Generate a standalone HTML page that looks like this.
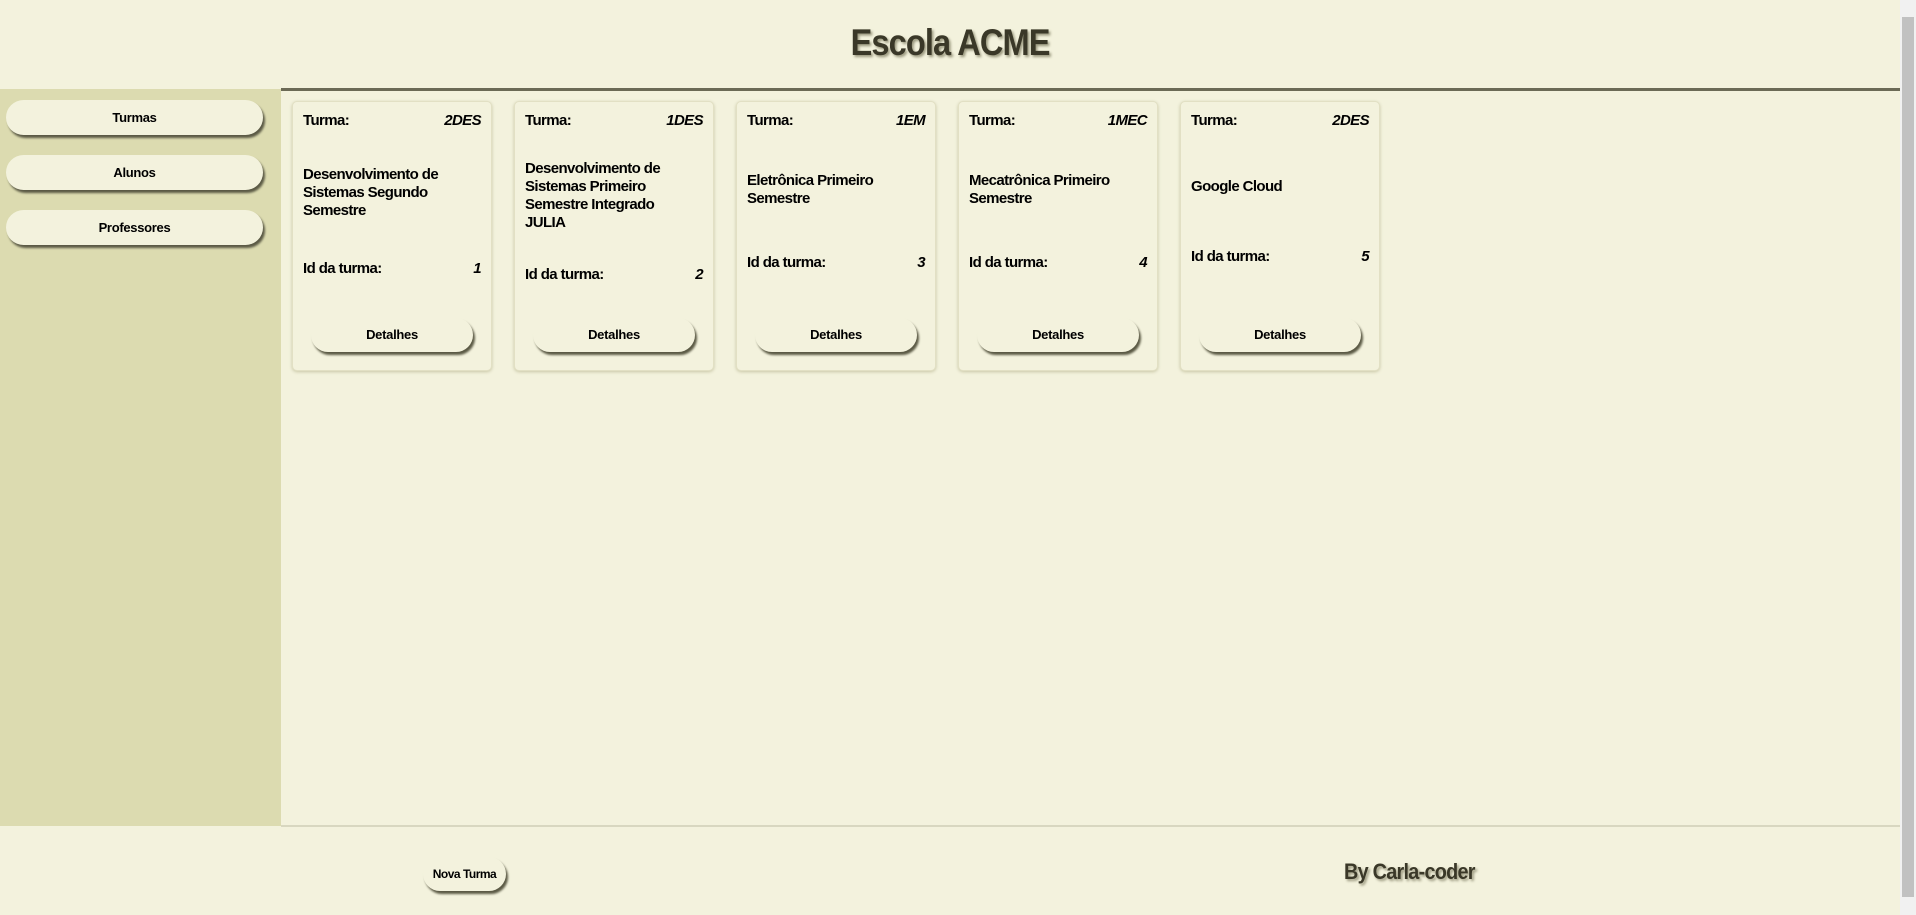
<!DOCTYPE html>
<html><head><meta charset="utf-8"><style>
*{box-sizing:border-box;margin:0;padding:0}
body{width:1916px;height:915px;overflow:hidden;background:#f3f2dd;font-family:"Liberation Sans Narrow","Liberation Sans",sans-serif;position:relative;color:#000}
.header{position:absolute;left:0;top:0;width:1900px;height:89px;text-align:center}
.header h1{display:inline-block;font-size:37px;font-weight:bold;line-height:86px;color:#3a3828;text-shadow:2px 2px 3px #9a987e;letter-spacing:-1px;transform:scaleX(0.88)}
.line{position:absolute;left:281px;top:88px;width:1619px;height:3px;background:#6b6a55}
.side{position:absolute;left:0;top:89px;width:281px;height:737px;background:#dcdbb0}
.sbtn{position:absolute;left:6px;width:257px;height:35px;border-radius:18px;background:#f3f2dd;box-shadow:2px 3px 2px #5b5a45;font-size:13px;font-weight:bold;text-align:center;line-height:35px;letter-spacing:-0.3px}
.card{position:absolute;top:101px;width:200px;height:270px;border-radius:5px;background:#f3f2dd;box-shadow:0 1px 3px #c8c6a5;border:1px solid #e2e0c4;padding:10px 10px 18px 10px;display:flex;flex-direction:column;justify-content:space-between;letter-spacing:-0.6px}
.row{display:flex;justify-content:space-between;font-size:15px;font-weight:bold}
.row i{font-style:italic}
.desc{font-size:15px;font-weight:bold;line-height:18px;margin-top:-4px}
.dbtn{align-self:center;width:162px;height:34px;border-radius:17px;background:#f3f2dd;box-shadow:2px 3px 2px #5b5a45;font-size:13px;font-weight:bold;text-align:center;line-height:34px;margin-left:0;letter-spacing:-0.3px}
.fline{position:absolute;left:281px;top:825px;width:1619px;height:2px;background:#d8d7c0}
.nova{position:absolute;left:423px;top:857px;width:83px;height:34px;border-radius:17px;background:#f3f2dd;box-shadow:2px 3px 2px #5b5a45;font-size:12px;font-weight:bold;text-align:center;line-height:34px;letter-spacing:-0.5px}
.by{position:absolute;left:1344px;top:859px;font-size:22px;font-weight:bold;color:#3a3828;text-shadow:2px 2px 3px #9a987e;letter-spacing:-0.8px;transform:scaleX(0.9);transform-origin:left}
.sb{position:absolute;left:1900px;top:0;width:16px;height:915px;background:#f1f1f1}
.sb div{position:absolute;left:2px;top:17px;width:12px;height:880px;background:#c1c1c1}
</style></head><body>
<div class="header"><h1>Escola ACME</h1></div>
<div class="side">
<div class="sbtn" style="top:11px">Turmas</div>
<div class="sbtn" style="top:66px">Alunos</div>
<div class="sbtn" style="top:121px">Professores</div>
</div>
<div class="line"></div>

<div class="card" style="left:292px"><div class="row"><span>Turma:</span><i>2DES</i></div><div class="desc">Desenvolvimento de Sistemas Segundo Semestre</div><div class="row"><span>Id da turma:</span><i>1</i></div><div class="dbtn">Detalhes</div></div>
<div class="card" style="left:514px"><div class="row"><span>Turma:</span><i>1DES</i></div><div class="desc">Desenvolvimento de Sistemas Primeiro Semestre Integrado<br>JULIA</div><div class="row"><span>Id da turma:</span><i>2</i></div><div class="dbtn">Detalhes</div></div>
<div class="card" style="left:736px"><div class="row"><span>Turma:</span><i>1EM</i></div><div class="desc">Eletrônica Primeiro Semestre</div><div class="row"><span>Id da turma:</span><i>3</i></div><div class="dbtn">Detalhes</div></div>
<div class="card" style="left:958px"><div class="row"><span>Turma:</span><i>1MEC</i></div><div class="desc">Mecatrônica Primeiro Semestre</div><div class="row"><span>Id da turma:</span><i>4</i></div><div class="dbtn">Detalhes</div></div>
<div class="card" style="left:1180px"><div class="row"><span>Turma:</span><i>2DES</i></div><div class="desc">Google Cloud</div><div class="row"><span>Id da turma:</span><i>5</i></div><div class="dbtn">Detalhes</div></div>

<div class="fline"></div>
<div class="nova">Nova Turma</div>
<div class="by">By Carla-coder</div>
<div class="sb"><div></div></div>
</body></html>
